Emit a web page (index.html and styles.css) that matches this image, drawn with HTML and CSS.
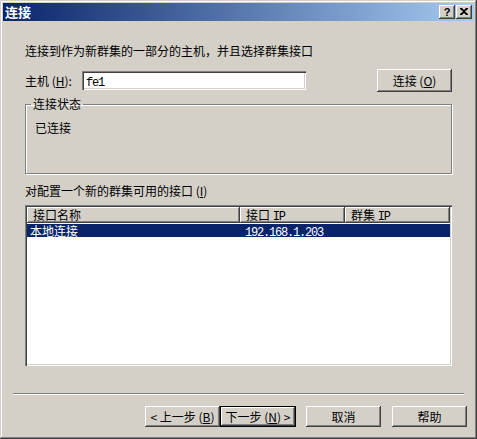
FILE: index.html
```html
<!DOCTYPE html>
<html lang="zh-CN">
<head>
<meta charset="utf-8">
<title>连接</title>
<link rel="stylesheet" href="styles.css">
</head>
<body>
<div class="window">
  <div class="titlebar">
    <span class="title">连接</span>
    <div class="tbtns">
      <span class="tbtn help">?</span>
      <span class="tbtn close"><svg width="8" height="7" viewBox="0 0 8 7"><path d="M0 0h2l2 2 2-2h2v1L5 3.5 8 6v1H6L4 5 2 7H0V6l3-2.5L0 1z" fill="#000"/></svg></span>
    </div>
  </div>
  <div class="content">
    <p class="intro">连接到作为新群集的一部分的主机，并且选择群集接口</p>
    <div class="hostrow">
      <span class="hostlabel">主机 (<u>H</u>):</span>
      <div class="input"><span class="mono">fe1</span></div>
      <button class="btn connect">连接 (<u>O</u>)</button>
    </div>
    <fieldset class="group">
      <legend>连接状态</legend>
      <div class="status">已连接</div>
    </fieldset>
    <p class="listlabel">对配置一个新的群集可用的接口 (<u>I</u>)</p>
    <div class="list">
      <div class="hdr">
        <div class="hcell c1">接口名称</div>
        <div class="hcell c2">接口 <span class="mono">IP</span></div>
        <div class="hcell c3">群集 <span class="mono">IP</span></div>
      </div>
      <div class="row sel">
        <div class="cell c1">本地连接</div>
        <div class="cell c2"><span class="mono">192.168.1.203</span></div>
        <div class="cell c3"></div>
      </div>
    </div>
  </div>
  <div class="sep"></div>
  <div class="buttons">
    <button class="btn back">&lt; 上一步 (<u>B</u>)</button>
    <button class="btn next">下一步 (<u>N</u>) &gt;</button>
    <button class="btn cancel">取消</button>
    <button class="btn helpbtn">帮助</button>
  </div>
</div>
</body>
</html>
```
FILE: styles.css
```css
* { box-sizing: border-box; }
html, body { margin: 0; padding: 0; background: #d4d0c8; }
body { font: 12px/14px "Noto Sans CJK SC", "Liberation Sans", sans-serif; color: #000; }

.window {
  width: 477px;
  height: 439px;
  padding: 3px;
  background: #d4d0c8;
  box-shadow: inset -1px -1px 0 #404040, inset 1px 1px 0 #d4d0c8, inset -2px -2px 0 #808080, inset 2px 2px 0 #fff;
  display: flex;
  flex-direction: column;
}

.titlebar {
  height: 18px;
  display: flex;
  align-items: center;
  justify-content: space-between;
  background: linear-gradient(to right, #0a246a, #a6caf0);
}
.title {
  color: #fff;
  font-weight: bold;
  font-size: 13px;
  padding-left: 2px;
  line-height: 18px;
}
.tbtns { display: flex; gap: 1px; padding-right: 2px; }
.tbtn {
  width: 16px;
  height: 14px;
  background: #d4d0c8;
  box-shadow: inset -1px -1px 0 #404040, inset 1px 1px 0 #fff, inset -2px -2px 0 #808080;
  display: flex;
  align-items: center;
  justify-content: center;
  font: bold 11px/14px "Liberation Sans", sans-serif;
  padding-bottom: 1px;
}

.content { padding: 23px 22px 0 22px; }
.intro { margin: 0; }

.hostrow {
  margin-top: 11px;
  height: 23px;
  display: flex;
  align-items: center;
}
.hostlabel { width: 57px; }
.input {
  width: 224px;
  height: 19px;
  background: #fff;
  box-shadow: inset 1px 1px 0 #808080, inset 2px 2px 0 #404040, inset -1px -1px 0 #fff, inset -2px -2px 0 #d4d0c8;
  padding: 2px 4px 0 4px;
  line-height: 16px;
}
.mono { font-family: "Liberation Mono", monospace; font-size: 12px; letter-spacing: -1.2px; }

.btn {
  font: inherit;
  color: #000;
  background: #d4d0c8;
  border: 0;
  padding: 0;
  width: 75px;
  box-shadow: inset -1px -1px 0 #404040, inset 1px 1px 0 #fff, inset -2px -2px 0 #808080;
}
.connect { margin-left: auto; height: 23px; }

.group {
  margin: 5px 0 0 0;
  padding: 10px 0 0 5px;
  border: 1px solid #808080;
  box-shadow: inset 1px 1px 0 #fff, 1px 1px 0 #fff;
}
.group legend { padding: 0 2px; line-height: 14px; }
.status { height: 52px; padding-left: 4px; }

.listlabel { margin: 10px 0 0 0; }

.list {
  margin-top: 7px;
  height: 161px;
  background: #fff;
  padding: 2px;
  box-shadow: inset 1px 1px 0 #808080, inset 2px 2px 0 #404040, inset -1px -1px 0 #fff, inset -2px -2px 0 #d4d0c8;
}
.hdr { display: flex; height: 16px; background: #d4d0c8; }
.hcell {
  height: 16px;
  line-height: 15px;
  padding-left: 6px;
  box-shadow: inset -1px -1px 0 #404040, inset 1px 1px 0 #fff, inset -2px -2px 0 #808080;
}
.c1 { width: 213px; }
.c2 { width: 105px; }
.c3 { width: 105px; }
.row { display: flex; margin-top: 1px; height: 13px; line-height: 13px; }
.sel { background: #0a246a; color: #fff; }
.cell { padding-left: 3px; }
.row .c2 { padding-left: 5px; }

.sep {
  margin: 27px 10px 0 10px;
  height: 2px;
  border-top: 1px solid #808080;
  border-bottom: 1px solid #fff;
}

.buttons {
  margin-top: 11px;
  display: flex;
  justify-content: flex-end;
  padding-right: 7px;
}
.buttons .btn { height: 21px; }
.next { width: 76px; border: 1px solid #000; margin-right: 10px; }
.cancel { margin-right: 11px; }
u { text-decoration: underline; text-underline-offset: 1px; }
```
